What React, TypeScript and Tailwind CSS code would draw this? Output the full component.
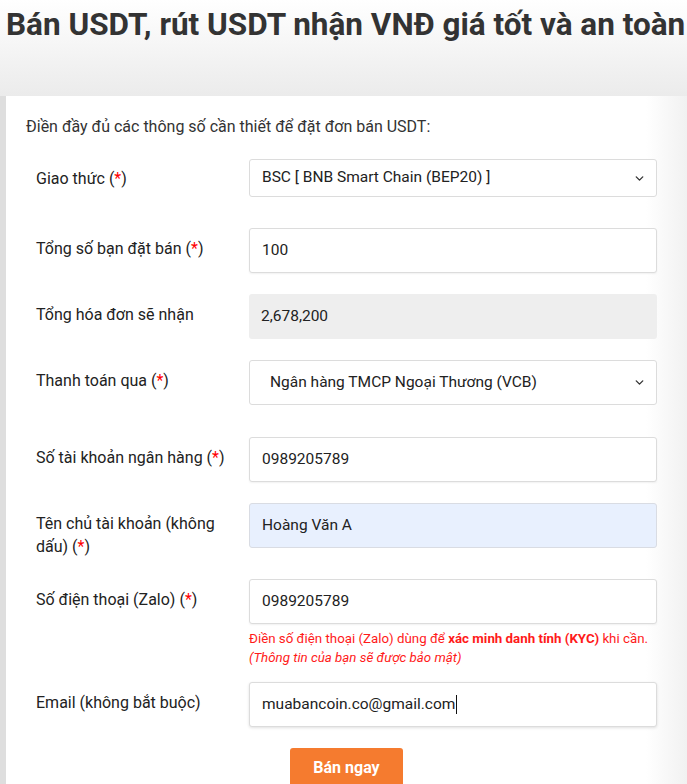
import { ChevronDown } from "lucide-react";

type Field = {
  value: string;
  kind: "select" | "input" | "readonly" | "autofill";
  selectPad?: string;
  height?: string;
};

const Star = () => <span className="text-[#ff0000]">*</span>;

function Label({ text, required }: { text: string; required?: boolean }) {
  return (
    <div className="pr-3 text-[16px] leading-[23px] text-[#222]">
      {text}
      {required && (
        <>
          {" "}(<Star />)
        </>
      )}
    </div>
  );
}

function Box({ field }: { field: Field }) {
  const base = "flex w-[408px] items-center rounded-[3px] text-[15.5px] text-[#222]";
  if (field.kind === "readonly") {
    return <div className={`${base} h-[45px] bg-[#eeeeee] px-[12px]`}>{field.value}</div>;
  }
  if (field.kind === "autofill") {
    return (
      <div className={`${base} h-[45px] border border-[#d9dce3] bg-[#e8f0fe] px-[12px]`}>
        {field.value}
      </div>
    );
  }
  if (field.kind === "select") {
    return (
      <div
        className={`${base} ${field.height ?? "h-[45px]"} justify-between border border-[#dcdcdc] bg-white ${field.selectPad ?? "pl-[12px]"} pr-[10px]`}
      >
        <span>{field.value}</span>
        <ChevronDown className="h-[13px] w-[13px] text-[#333]" strokeWidth={2.5} />
      </div>
    );
  }
  return (
    <div
      className={`${base} h-[45px] border border-[#dcdcdc] bg-white px-[12px] shadow-[0_1px_2px_rgba(0,0,0,0.06)]`}
    >
      {field.value}
    </div>
  );
}

export default function App() {
  return (
    <div className="min-h-[784px] bg-[#dedede] font-['Roboto',sans-serif]">
      <div className="bg-[linear-gradient(to_bottom,#ffffff,#ebebeb)] pl-[6px] pb-[54px] pt-[8px]">
        <h1 className="whitespace-nowrap text-[31.5px] font-bold leading-[34px] text-[#333]">
          Bán USDT, rút USDT nhận VNĐ giá tốt và an toàn
        </h1>
      </div>
      <div className="ml-[6px] min-h-[688px] bg-[linear-gradient(to_right,#ffffff_94%,#f1f1f1)] pl-[20px] pt-[20px]">
        <p className="text-[16px] leading-[22px] text-[#333]">
          Điền đầy đủ các thông số cần thiết để đặt đơn bán USDT:
        </p>

        <div className="mt-[21px] pl-[10px]">
          <div className="grid grid-cols-[213px_408px] items-start">
            <div className="pt-[8px]">
              <Label text="Giao thức" required />
            </div>
            <Box field={{ value: "BSC [ BNB Smart Chain (BEP20) ]", kind: "select", height: "h-[38px]" }} />
          </div>

          <div className="mt-[31px] grid grid-cols-[213px_408px] items-start">
            <div className="pt-[9px]">
              <Label text="Tổng số bạn đặt bán" required />
            </div>
            <Box field={{ value: "100", kind: "input" }} />
          </div>

          <div className="mt-[21px] grid grid-cols-[213px_408px] items-start">
            <div className="pt-[9px]">
              <Label text="Tổng hóa đơn sẽ nhận" />
            </div>
            <Box field={{ value: "2,678,200", kind: "readonly" }} />
          </div>

          <div className="mt-[21px] grid grid-cols-[213px_408px] items-start">
            <div className="pt-[9px]">
              <Label text="Thanh toán qua" required />
            </div>
            <Box field={{ value: "Ngân hàng TMCP Ngoại Thương (VCB)", kind: "select", selectPad: "pl-[20px]" }} />
          </div>

          <div className="mt-[32px] grid grid-cols-[213px_408px] items-start">
            <div className="pt-[9px]">
              <Label text="Số tài khoản ngân hàng" required />
            </div>
            <Box field={{ value: "0989205789", kind: "input" }} />
          </div>

          <div className="mt-[21px] grid grid-cols-[213px_408px] items-start">
            <div className="pt-[9px]">
              <Label text="Tên chủ tài khoản (không dấu)" required />
            </div>
            <Box field={{ value: "Hoàng Văn A", kind: "autofill" }} />
          </div>

          <div className="mt-[21px] grid grid-cols-[213px_408px] items-start">
            <div className="pt-[9px]">
              <Label text="Số điện thoại (Zalo)" required />
            </div>
            <div>
              <Box field={{ value: "0989205789", kind: "input" }} />
              <div className="mt-[5px] text-[13.3px] leading-[19px] text-[#ff1a1a]">
                <p>
                  Điền số điện thoại (Zalo) dùng để{" "}
                  <b className="font-bold">xác minh danh tính (KYC)</b> khi cần.
                </p>
                <p className="italic">(Thông tin của bạn sẽ được bảo mật)</p>
              </div>
            </div>
          </div>

          <div className="mt-[15px] grid grid-cols-[213px_408px] items-start">
            <div className="pt-[9px]">
              <Label text="Email (không bắt buộc)" />
            </div>
            <div className="flex h-[45px] w-[408px] items-center rounded-[3px] border border-[#dcdcdc] bg-white px-[12px] text-[15.5px] text-[#222] shadow-[0_1px_3px_rgba(0,0,0,0.12)]">
              muabancoin.co@gmail.com
              <span className="ml-[1px] inline-block h-[19px] w-[1px] bg-[#111]" />
            </div>
          </div>

          <div className="mt-[21px] flex pl-[254px]">
            <button className="h-[40px] w-[113px] rounded-[3px] bg-[#f57b2f] text-[16px] font-bold text-white">
              Bán ngay
            </button>
          </div>
        </div>
      </div>
    </div>
  );
}
